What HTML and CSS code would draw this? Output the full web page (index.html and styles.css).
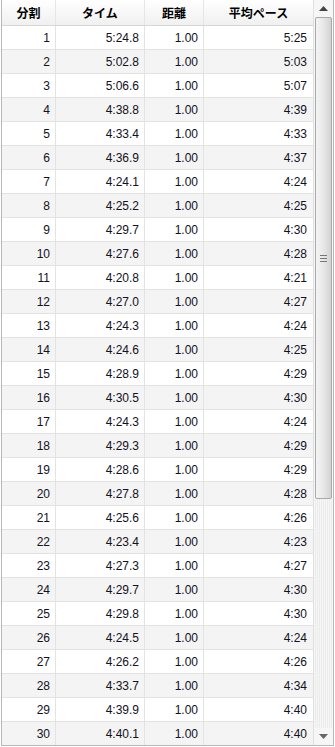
FILE: index.html
```html
<!DOCTYPE html>
<html>
<head>
<meta charset="utf-8">
<link rel="stylesheet" href="styles.css">
</head>
<body>
<div class="frame">
  <div class="grid">
    <div class="row head">
      <div class="cell">分割</div>
      <div class="cell">タイム</div>
      <div class="cell">距離</div>
      <div class="cell">平均ペース</div>
    </div>
    <div class="row"><div class="cell">1</div><div class="cell">5:24.8</div><div class="cell">1.00</div><div class="cell">5:25</div></div>
    <div class="row alt"><div class="cell">2</div><div class="cell">5:02.8</div><div class="cell">1.00</div><div class="cell">5:03</div></div>
    <div class="row"><div class="cell">3</div><div class="cell">5:06.6</div><div class="cell">1.00</div><div class="cell">5:07</div></div>
    <div class="row alt"><div class="cell">4</div><div class="cell">4:38.8</div><div class="cell">1.00</div><div class="cell">4:39</div></div>
    <div class="row"><div class="cell">5</div><div class="cell">4:33.4</div><div class="cell">1.00</div><div class="cell">4:33</div></div>
    <div class="row alt"><div class="cell">6</div><div class="cell">4:36.9</div><div class="cell">1.00</div><div class="cell">4:37</div></div>
    <div class="row"><div class="cell">7</div><div class="cell">4:24.1</div><div class="cell">1.00</div><div class="cell">4:24</div></div>
    <div class="row alt"><div class="cell">8</div><div class="cell">4:25.2</div><div class="cell">1.00</div><div class="cell">4:25</div></div>
    <div class="row"><div class="cell">9</div><div class="cell">4:29.7</div><div class="cell">1.00</div><div class="cell">4:30</div></div>
    <div class="row alt"><div class="cell">10</div><div class="cell">4:27.6</div><div class="cell">1.00</div><div class="cell">4:28</div></div>
    <div class="row"><div class="cell">11</div><div class="cell">4:20.8</div><div class="cell">1.00</div><div class="cell">4:21</div></div>
    <div class="row alt"><div class="cell">12</div><div class="cell">4:27.0</div><div class="cell">1.00</div><div class="cell">4:27</div></div>
    <div class="row"><div class="cell">13</div><div class="cell">4:24.3</div><div class="cell">1.00</div><div class="cell">4:24</div></div>
    <div class="row alt"><div class="cell">14</div><div class="cell">4:24.6</div><div class="cell">1.00</div><div class="cell">4:25</div></div>
    <div class="row"><div class="cell">15</div><div class="cell">4:28.9</div><div class="cell">1.00</div><div class="cell">4:29</div></div>
    <div class="row alt"><div class="cell">16</div><div class="cell">4:30.5</div><div class="cell">1.00</div><div class="cell">4:30</div></div>
    <div class="row"><div class="cell">17</div><div class="cell">4:24.3</div><div class="cell">1.00</div><div class="cell">4:24</div></div>
    <div class="row alt"><div class="cell">18</div><div class="cell">4:29.3</div><div class="cell">1.00</div><div class="cell">4:29</div></div>
    <div class="row"><div class="cell">19</div><div class="cell">4:28.6</div><div class="cell">1.00</div><div class="cell">4:29</div></div>
    <div class="row alt"><div class="cell">20</div><div class="cell">4:27.8</div><div class="cell">1.00</div><div class="cell">4:28</div></div>
    <div class="row"><div class="cell">21</div><div class="cell">4:25.6</div><div class="cell">1.00</div><div class="cell">4:26</div></div>
    <div class="row alt"><div class="cell">22</div><div class="cell">4:23.4</div><div class="cell">1.00</div><div class="cell">4:23</div></div>
    <div class="row"><div class="cell">23</div><div class="cell">4:27.3</div><div class="cell">1.00</div><div class="cell">4:27</div></div>
    <div class="row alt"><div class="cell">24</div><div class="cell">4:29.7</div><div class="cell">1.00</div><div class="cell">4:30</div></div>
    <div class="row"><div class="cell">25</div><div class="cell">4:29.8</div><div class="cell">1.00</div><div class="cell">4:30</div></div>
    <div class="row alt"><div class="cell">26</div><div class="cell">4:24.5</div><div class="cell">1.00</div><div class="cell">4:24</div></div>
    <div class="row"><div class="cell">27</div><div class="cell">4:26.2</div><div class="cell">1.00</div><div class="cell">4:26</div></div>
    <div class="row alt"><div class="cell">28</div><div class="cell">4:33.7</div><div class="cell">1.00</div><div class="cell">4:34</div></div>
    <div class="row"><div class="cell">29</div><div class="cell">4:39.9</div><div class="cell">1.00</div><div class="cell">4:40</div></div>
    <div class="row alt"><div class="cell">30</div><div class="cell">4:40.1</div><div class="cell">1.00</div><div class="cell">4:40</div></div>
  </div>
  <div class="scrollbar">
    <div class="sb-btn"><svg width="9" height="5" viewBox="0 0 9 5"><path d="M0 5 L4.5 0 L9 5 Z" fill="#444"/></svg></div>
    <div class="sb-track">
      <div class="sb-thumb">
        <div class="grip"><span></span><span></span><span></span></div>
      </div>
      <div class="sb-rest"></div>
    </div>
    <div class="sb-btn"><svg width="9" height="5" viewBox="0 0 9 5"><path d="M0 0 L9 0 L4.5 5 Z" fill="#666"/></svg></div>
  </div>
</div>
</body>
</html>
```

FILE: styles.css
```css
html, body {
  margin: 0;
  padding: 0;
  background: #ffffff;
}

.frame {
  margin-left: 1px;
  width: 333px;
  height: 746px;
  box-sizing: border-box;
  border-left: 1px solid #b8b8b8;
  border-right: 1px solid #b8b8b8;
  border-bottom: 1px solid #b8b8b8;
  display: flex;
  overflow: hidden;
}

.grid {
  width: 311px;
  flex: none;
  display: flex;
  flex-direction: column;
  font-family: "Liberation Sans", Arial, sans-serif;
  font-size: 12px;
  color: #111122;
}

.row {
  display: grid;
  grid-template-columns: 54px 89px 59px 109px;
  height: 24px;
  box-sizing: border-box;
  border-bottom: 1px solid #e3e3e3;
  background: #ffffff;
  flex: none;
}

.row.alt {
  background: #f4f4f4;
}

.cell {
  box-sizing: border-box;
  border-right: 1px solid #e3e3e3;
  display: flex;
  align-items: center;
  justify-content: flex-end;
  padding-right: 5px;
}

.cell:last-child {
  border-right: none;
  padding-right: 6px;
}

.row.head {
  height: 26px;
  background: linear-gradient(#ffffff, #f0f0f0);
  border-bottom: 1px solid #d6d6d6;
  font-family: "Noto Sans CJK JP", "Liberation Sans", sans-serif;
  font-weight: bold;
  font-size: 12px;
  color: #000000;
}

.row.head .cell {
  justify-content: center;
  padding: 0;
  border-right: 1px solid #e6e6e6;
}

.row.head .cell:last-child {
  border-right: none;
}

.scrollbar {
  width: 20px;
  flex: none;
  display: flex;
  flex-direction: column;
  border-left: 1px solid #e0e0e0;
  box-sizing: border-box;
  background: #f2f2f2;
}

.sb-btn {
  height: 17px;
  flex: none;
  display: flex;
  align-items: center;
  justify-content: center;
  background: #f6f6f6;
}

.sb-track {
  flex: 1;
  display: flex;
  flex-direction: column;
  padding: 0 1px;
  background-color: #eeeeee;
  background-image: repeating-linear-gradient(90deg, #f7f7f7 0 1px, #ebebeb 1px 2px);
}

.sb-thumb {
  height: 482px;
  flex: none;
  box-sizing: border-box;
  border: 1px solid #a9a9a9;
  border-radius: 2px;
  background: linear-gradient(90deg, #f4f4f4, #e9e9e9 45%, #d2d2d2);
  display: flex;
  align-items: center;
  justify-content: center;
}

.grip {
  display: flex;
  flex-direction: column;
  gap: 2px;
}

.grip span {
  display: block;
  width: 7px;
  height: 1px;
  background: #777777;
}

.sb-rest {
  flex: 1;
}
```
